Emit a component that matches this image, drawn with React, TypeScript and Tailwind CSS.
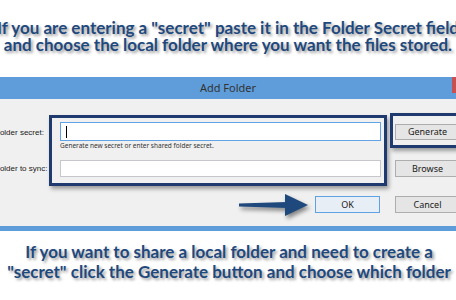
const note = "font-['Lato',sans-serif] font-bold text-[#1f497d] whitespace-nowrap [text-shadow:2px_2px_3px_rgba(0,0,0,0.4)]";

function WinButton({ label, primary = false, className = "" }: { label: string; primary?: boolean; className?: string }) {
  return (
    <div
      className={`flex items-center justify-center w-[65px] text-[9px] text-[#1a1a1a] border ${
        primary ? "border-[#5fa2e3] bg-[#e8eef5]" : "border-[#adadad] bg-[#e5e5e5]"
      } ${className}`}
    >
      {label}
    </div>
  );
}

function Arrow() {
  return (
    <svg
      width="72"
      height="26"
      viewBox="0 0 72 26"
      className="absolute left-[238px] top-[192px] drop-shadow-[2px_3px_2px_rgba(0,0,0,0.45)]"
    >
      <polygon points="1,11.5 49,10 49,16 1,14.5" fill="#1f497d" />
      <polygon points="47,2 70,13 47,24" fill="#1f497d" />
    </svg>
  );
}

export default function App() {
  return (
    <div className="relative w-[456px] h-[300px] overflow-hidden bg-white">
      {/* top note */}
      <div className={`h-[77px] pt-[19px] flex flex-col items-center text-[17px] leading-[17px] ${note}`}>
        <span>If you are entering a "secret" paste it in the Folder Secret field</span>
        <span>and choose the local folder where you want the files stored.</span>
      </div>

      {/* dialog */}
      <div className="ml-[-20px] w-[496px] font-['Noto_Sans',sans-serif]">
        <div className="flex h-[22px] bg-[#5e9dda]">
          <div className="w-[24px]" />
          <div className="flex-1 flex items-center justify-center text-[11px] text-[#333]">Add Folder</div>
          <div className="w-[24px] h-[16px] bg-[#c75050]" />
        </div>

        <div className="flex flex-col pt-[14px] pb-[13px] bg-[#f0f0f0] border-b-[5px] border-[#5e9dda]">
          <div className="flex items-start">
            <div className="flex flex-col w-[69px] pl-[15px] font-['Liberation_Sans',sans-serif] text-[8px] leading-[12px] text-[#1a1a1a] whitespace-nowrap">
              <span className="mt-[14px]">Folder secret:</span>
              <span className="mt-[24px]">Folder to sync:</span>
            </div>

            <div className="mt-[2px] flex flex-col w-[338px] border-[3px] border-[#1e3a6e] pl-[8px] pr-[3px] pt-[4px] pb-[6px] bg-[#f0f0f0] shadow-[2px_3px_4px_rgba(0,0,0,0.35)]">
              <div className="flex items-center h-[19px] pl-[5px] bg-white border border-[#62a3e6]">
                <div className="w-px h-[12px] bg-black" />
              </div>
              <div className="mt-[1px] h-[8px] text-[6.5px] leading-[8px] text-[#333] whitespace-nowrap">
                Generate new secret or enter shared folder secret.
              </div>
              <div className="mt-[10px] h-[17px] bg-white border border-[#c5c7cc]" />
            </div>

            <div className="ml-[3px] flex flex-col">
              <div className="w-[70px] border-[3px] border-[#1e3a6e] pl-[2px] pt-[8px] pb-[5px] shadow-[2px_3px_4px_rgba(0,0,0,0.35)]">
                <WinButton label="Generate" className="h-[16px]" />
              </div>
              <WinButton label="Browse" className="mt-[12px] ml-[5px] h-[17px]" />
            </div>
          </div>

          <div className="mt-[10px] flex justify-end gap-[15px] pr-[16px]">
            <WinButton label="OK" primary className="h-[17px]" />
            <WinButton label="Cancel" className="h-[17px]" />
          </div>
        </div>
      </div>

      {/* bottom note */}
      <div className={`pt-[11px] flex flex-col items-center pl-[2px] text-[17px] leading-[20px] ${note}`}>
        <span>If you want to share a local folder and need to create a</span>
        <span>"secret" click the Generate button and choose which folder</span>
      </div>

      <Arrow />
    </div>
  );
}
